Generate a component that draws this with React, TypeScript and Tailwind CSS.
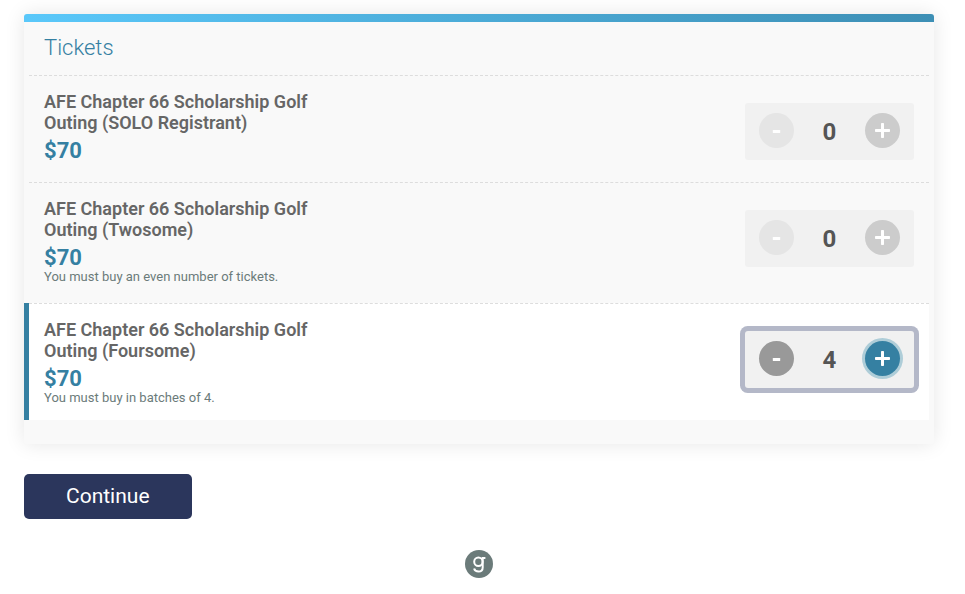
import { useState } from "react";
import { clsx } from "clsx";

type Ticket = {
  id: string;
  name: string;
  price: number;
  step: number;
  note?: string;
};

const tickets: Ticket[] = [
  {
    id: "solo",
    name: "AFE Chapter 66 Scholarship Golf Outing (SOLO Registrant)",
    price: 70,
    step: 1,
  },
  {
    id: "twosome",
    name: "AFE Chapter 66 Scholarship Golf Outing (Twosome)",
    price: 70,
    step: 2,
    note: "You must buy an even number of tickets.",
  },
  {
    id: "foursome",
    name: "AFE Chapter 66 Scholarship Golf Outing (Foursome)",
    price: 70,
    step: 4,
    note: "You must buy in batches of 4.",
  },
];

function QuantityPicker({
  ticket,
  quantity,
  onChange,
}: {
  ticket: Ticket;
  quantity: number;
  onChange: (quantity: number) => void;
}) {
  const active = quantity > 0;

  return (
    <div
      role="group"
      aria-labelledby={`${ticket.id}-name`}
      className={clsx(
        "mt-[27px] flex h-[57px] w-[169px] shrink-0 items-start justify-between rounded-[3px] bg-[#f1f1f1] px-3.5 pt-2.5",
        active && "ring-5 ring-[#b4b8c8]"
      )}
    >
      <button
        type="button"
        aria-label="Remove tickets"
        disabled={!active}
        onClick={() => onChange(quantity - ticket.step)}
        className={clsx(
          "flex size-[35px] items-center justify-center rounded-full text-white",
          active ? "bg-[#999999]" : "bg-[#e5e5e5]"
        )}
      >
        <svg viewBox="0 0 35 35" className="size-full" fill="currentColor" aria-hidden="true">
          <rect x="13.8" y="17" width="7.4" height="3" rx="0.6" />
        </svg>
      </button>
      <output className="text-2xl leading-[38px] font-bold text-[#555555]">{quantity}</output>
      <button
        type="button"
        aria-label="Add tickets"
        onClick={() => onChange(quantity + ticket.step)}
        className={clsx(
          "flex size-[35px] items-center justify-center rounded-full text-white",
          active ? "bg-[#3580a2] ring-3 ring-[#aecdd8]" : "bg-[#cccccc]"
        )}
      >
        <svg viewBox="0 0 35 35" className="size-full" fill="currentColor" aria-hidden="true">
          <rect x="16" y="10" width="3" height="15" rx="0.8" />
          <rect x="10" y="16" width="15" height="3" rx="0.8" />
        </svg>
      </button>
    </div>
  );
}

function GivebutterMark() {
  return (
    <svg viewBox="0 0 28 28" className="size-7" aria-hidden="true">
      <circle cx="14" cy="14" r="14" fill="#6b7b7a" />
      <g fill="none" stroke="#ffffff" strokeWidth="2">
        <circle cx="13.4" cy="11.8" r="4.2" />
        <path d="M20.4 7.9h-2.7v9.6c0 2.8-1.7 4.1-4.1 4.1-2.4 0-4-1-4.5-3" />
      </g>
    </svg>
  );
}

export default function App() {
  const [quantities, setQuantities] = useState<Record<string, number>>({
    solo: 0,
    twosome: 0,
    foursome: 4,
  });

  return (
    <main className="bg-white pt-3.5 pr-[31px] pl-6 font-[Roboto,sans-serif]">
      <form onSubmit={(e) => e.preventDefault()}>
        <section className="overflow-hidden rounded-[3px] bg-[#f9f9f9] pb-6 shadow-[0_0_20px_rgba(0,0,0,0.1)]">
          <div className="h-2 bg-linear-to-r from-[#5ac8fa] to-[#3d8fb5]" />
          <h2 className="px-5 pt-[11px] pb-3 text-[22px] leading-[30px] font-light text-[#3580a2]">
            Tickets
          </h2>

          <ul>
            {tickets.map((ticket) => {
              const quantity = quantities[ticket.id];

              return (
                <li
                  key={ticket.id}
                  className={clsx(
                    "group mr-[5px] border-l-5",
                    quantity > 0 ? "border-[#3580a2] bg-white" : "border-transparent"
                  )}
                >
                  <div className="flex items-start justify-between border-t border-dashed border-[#dddddd] pr-[15px] pb-[19px] pl-[15px] group-last:pb-[15px]">
                    <div className="w-[290px] pt-[15px]">
                      <h3
                        id={`${ticket.id}-name`}
                        className="text-lg leading-[21px] font-semibold text-[#666666]"
                      >
                        {ticket.name}
                      </h3>
                      <p className="mt-[5px] text-[22px] leading-[25px] font-bold text-[#3580a2]">
                        ${ticket.price}
                      </p>
                      {ticket.note && (
                        <p className="text-[13px] leading-[14px] text-[#6b7b7a]">{ticket.note}</p>
                      )}
                    </div>
                    <QuantityPicker
                      ticket={ticket}
                      quantity={quantity}
                      onChange={(next) => setQuantities({ ...quantities, [ticket.id]: next })}
                    />
                  </div>
                </li>
              );
            })}
          </ul>
        </section>

        <button
          type="submit"
          className="mt-[30px] h-[45px] rounded-[5px] bg-[#2b365c] px-[42px] text-[21px] text-white"
        >
          Continue
        </button>
      </form>

      <footer className="flex justify-center pt-[31px]">
        <a href="#" aria-label="Powered by g">
          <GivebutterMark />
        </a>
      </footer>
    </main>
  );
}
